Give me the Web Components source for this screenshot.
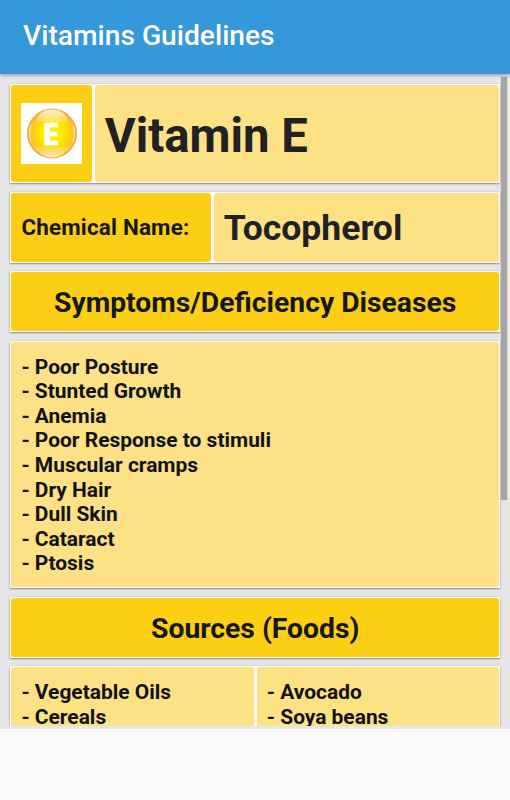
<!DOCTYPE html>
<html lang="en">
<head>
<meta charset="utf-8">
<title>Vitamins Guidelines</title>
<style>
html,body{margin:0;height:100%;background:#fafafa;overflow:hidden}
body{font-family:Roboto,"Liberation Sans",sans-serif;color:#202124;font-weight:700}
</style>
</head>
<body>
<vitamin-app>
  <app-bar slot="bar">Vitamins Guidelines</app-bar>
  <info-card style="--cols:80.4px 1fr;--h:99px">
    <info-cell strong><vitamin-icon></vitamin-icon></info-cell>
    <info-cell style="--size:47.3px;--drop:4px">Vitamin E</info-cell>
  </info-card>
  <info-card style="--cols:199.4px 1fr;--h:71px;--gap-after:8px">
    <info-cell strong style="--size:22.4px;--ink:#14171c;letter-spacing:.2px;padding-bottom:2px">Chemical Name:</info-cell>
    <info-cell style="--size:35.5px;--drop:1px">Tocopherol</info-cell>
  </info-card>
  <info-card style="--h:61px">
    <info-cell strong center style="--size:28.3px;--drop:2px">Symptoms/Deficiency Diseases</info-cell>
  </info-card>
  <info-card style="--h:247px">
    <info-cell list>- Poor Posture
- Stunted Growth
- Anemia
- Poor Response to stimuli
- Muscular cramps
- Dry Hair
- Dull Skin
- Cataract
- Ptosis</info-cell>
  </info-card>
  <info-card style="--h:61px;--gap-after:8px">
    <info-cell strong center style="--size:28.3px;--drop:2px">Sources (Foods)</info-cell>
  </info-card>
  <info-card style="--cols:242.4px 1fr;--h:247px">
    <info-cell list style="--top:13px">- Vegetable Oils
- Cereals</info-cell>
    <info-cell list style="--top:13px">- Avocado
- Soya beans</info-cell>
  </info-card>
</vitamin-app>
<script>
function define(name, html) {
  const template = document.createElement('template');
  template.innerHTML = html;
  customElements.define(name, class extends HTMLElement {
    constructor() {
      super();
      this.attachShadow({mode: 'open'}).append(template.content.cloneNode(true));
    }
  });
}

define('vitamin-app', `
<style>
:host{display:flex;flex-direction:column;height:800px;width:510px;background:#fafafa}
.view{position:relative;height:655px;background:#e6e6e6;box-sizing:border-box;padding-bottom:3px}
.scroll{height:652px;overflow:hidden;box-sizing:border-box;padding:10px 10px 0}
.thumb{position:absolute;right:3px;top:3px;width:6px;height:423px;background:#a5a5a5;box-shadow:0 0 1px #b5b5b5}
</style>
<slot name="bar"></slot>
<div class="view"><div class="scroll"><slot></slot></div><div class="thumb"></div></div>`);

define('app-bar', `
<style>
:host{display:flex;align-items:center;flex:none;height:74px;box-sizing:border-box;padding:0 23px 3px;background:#3498db;color:#fff;
font-size:28.2px;font-weight:500;position:relative;z-index:1;box-shadow:0 1px 4px #00000060;white-space:nowrap}
</style><slot></slot>`);

define('info-card', `
<style>
:host{display:grid;grid-template-columns:var(--cols,1fr);gap:3px;height:var(--h);box-sizing:border-box;padding:1px 1px 1px 1.4px;
margin-bottom:var(--gap-after,9px);background:#fafafa;border-radius:1px;box-shadow:0 1px 2px #00000060,0 0 2px #00000025}
</style><slot></slot>`);

define('info-cell', `
<style>
:host{display:flex;align-items:center;min-width:0;box-sizing:border-box;padding:var(--drop,0px) 10px 0 10px;border-radius:3px;background:#fce185;
font-size:var(--size,20.95px);color:var(--ink,#202124);white-space:nowrap}
:host([strong]){background:#fcce14}
:host([center]){justify-content:center;color:#14171c}
:host([list]){align-items:flex-start;white-space:pre;line-height:24.6px;color:#101318;padding-top:var(--top,12.6px)}
</style><slot></slot>`);

define('vitamin-icon', `
<style>:host{display:block;flex:none;width:61px;height:61px;background:#fff}svg{display:block}
text{font:700 31px "Open Sans",sans-serif;fill:#fff}</style>
<svg width="61" height="61" viewBox="0 0 61 61">
<defs>
<radialGradient id="ball" cx=".5" cy=".5" r=".5">
<stop offset="0" stop-color="#fff200"/><stop offset=".42" stop-color="#ffec00"/><stop offset=".78" stop-color="#fdcb16"/><stop offset=".93" stop-color="#fabb38"/><stop offset="1" stop-color="#f2a035"/>
</radialGradient>
<linearGradient id="shine" x1="0" y1="0" x2="0" y2="1"><stop offset="0" stop-color="#fff" stop-opacity=".8"/><stop offset="1" stop-color="#fff" stop-opacity=".2"/></linearGradient>
<linearGradient id="glow" x1="0" y1="0" x2="0" y2="1"><stop offset="0" stop-color="#fff" stop-opacity="0"/><stop offset="1" stop-color="#fff" stop-opacity=".7"/></linearGradient>
</defs>
<circle cx="31" cy="30.5" r="24.6" fill="url(#ball)" stroke="#f4a947" stroke-width=".8"/>
<path d="M15.5 18C17 10 24 6.5 31 6.5S45 10 46.500 18Q31 22 15.500 18Z" fill="url(#shine)"/>
<path d="M12 42Q31 45 50 42Q43 54.500 31 54.500T12 42Z" fill="url(#glow)"/>
<path d="M10 22Q7.500 30.500 10 39M52 22Q54.500 30.500 52 39" fill="none" stroke="#ffe3a5" stroke-width="1.1"/>
<text x="21.300" y="41.700" stroke="#fff" stroke-width=".7">E</text>
</svg>`);
</script>
</body>
</html>
